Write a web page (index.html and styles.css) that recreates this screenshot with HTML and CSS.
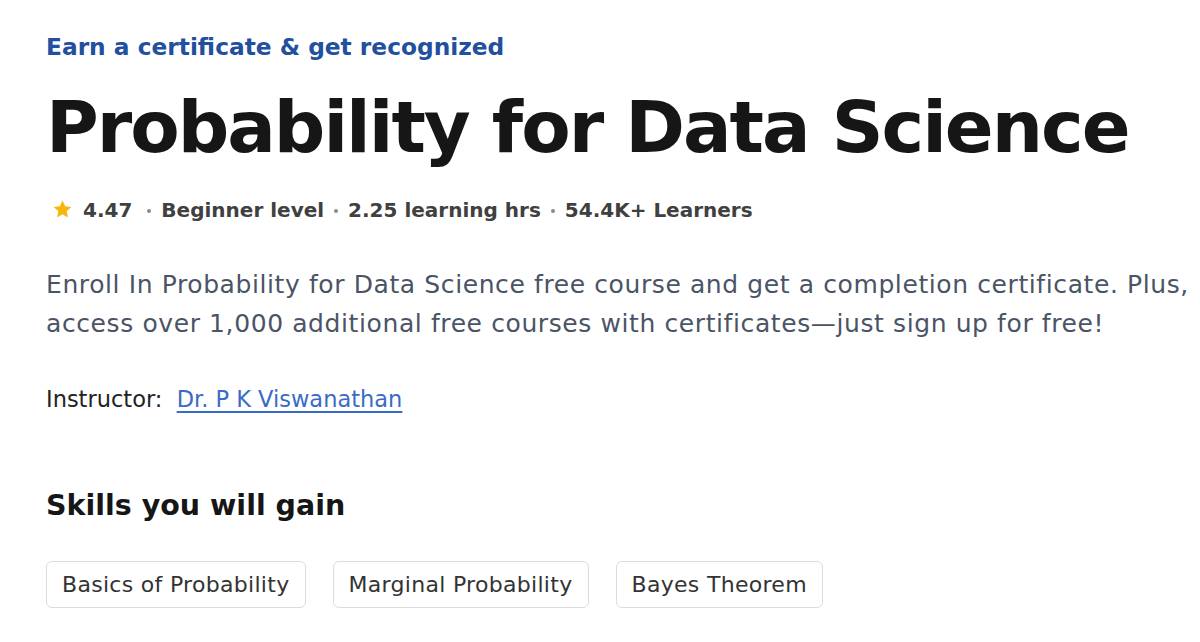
FILE: index.html
```html
<!DOCTYPE html>
<html lang="en">
<head>
<meta charset="utf-8">
<title>Probability for Data Science</title>
<link rel="stylesheet" href="styles.css">
</head>
<body>
<main class="page">
  <p class="eyebrow">Earn a certificate &amp; get recognized</p>
  <h1 class="title">Probability for Data Science</h1>
  <div class="meta">
    <span class="rating">
      <svg class="star" viewBox="0 0 24 24" width="21" height="21" aria-hidden="true"><path d="M12 1.8l3 6.6 7.1.75-5.35 4.8 1.55 7.05L12 17.4l-6.3 3.6 1.55-7.05L1.9 9.15 9 8.4z" fill="#f6b60b"/></svg>
      <span>4.47</span>
    </span>
    <span class="dot"></span>
    <span>Beginner level</span>
    <span class="dot"></span>
    <span>2.25 learning hrs</span>
    <span class="dot"></span>
    <span>54.4K+ Learners</span>
  </div>
  <p class="desc">Enroll In Probability for Data Science free course and get a completion certificate. Plus, access over 1,000 additional free courses with certificates—just sign up for free!</p>
  <p class="instructor">Instructor:&nbsp; <a href="#" class="link">Dr. P K Viswanathan</a></p>
  <h2 class="skills-title">Skills you will gain</h2>
  <ul class="chips">
    <li class="chip">Basics of Probability</li>
    <li class="chip">Marginal Probability</li>
    <li class="chip">Bayes Theorem</li>
  </ul>
</main>
</body>
</html>
```

FILE: styles.css
```css
html, body {
  margin: 0;
  padding: 0;
  background: #ffffff;
}
body {
  font-family: "DejaVu Sans", "Liberation Sans", sans-serif;
  overflow: hidden;
}
.page {
  padding: 30px 0 0 46px;
  width: 1154px;
}
.eyebrow {
  margin: 0;
  font-size: 23.3px;
  line-height: 34px;
  font-weight: 700;
  color: #22509f;
  white-space: nowrap;
}
.title {
  margin: 13px 0 0 0;
  font-size: 72px;
  line-height: 100px;
  font-weight: 700;
  color: #161616;
  letter-spacing: -2px;
  white-space: nowrap;
}
.meta {
  margin-top: 19px;
  display: flex;
  align-items: center;
  font-size: 20px;
  line-height: 28px;
  font-weight: 700;
  color: #404040;
  white-space: nowrap;
}
.rating {
  display: flex;
  align-items: center;
  gap: 10px;
  margin-left: 6px;
  margin-right: 5px;
}
.star {
  margin-top: -2px;
}
.dot {
  width: 4px;
  height: 4px;
  border-radius: 50%;
  background: #8a8a8a;
  margin: 2px 10px 0 10px;
}
.desc {
  margin: 41px 0 0 0;
  font-size: 25px;
  line-height: 39px;
  font-weight: 400;
  letter-spacing: 0.6px;
  color: #4b5466;
}
.instructor {
  margin: 41px 0 0 0;
  font-size: 22.5px;
  line-height: 30px;
  color: #222222;
}
.link {
  color: #3a6bc6;
  text-decoration: underline;
  text-decoration-thickness: 1.5px;
  text-underline-offset: 4px;
}
.skills-title {
  margin: 72px 0 0 0;
  font-size: 28.5px;
  line-height: 40px;
  font-weight: 700;
  color: #161616;
}
.chips {
  list-style: none;
  margin: 35px 0 0 0;
  padding: 0;
  display: flex;
  gap: 27px;
}
.chip {
  box-sizing: border-box;
  border: 1.5px solid #dcdcdc;
  border-radius: 6px;
  padding: 0 15px;
  height: 47px;
  display: flex;
  align-items: center;
  font-size: 22px;
  letter-spacing: 0.3px;
  color: #333333;
}
```
